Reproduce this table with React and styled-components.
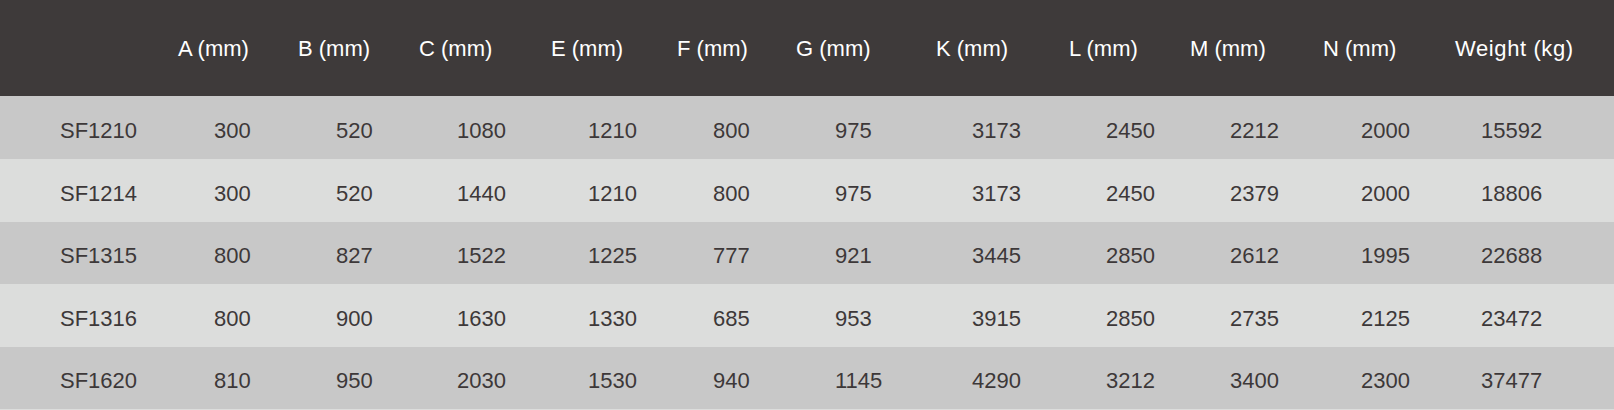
import React from 'react';
import styled, { createGlobalStyle } from 'styled-components';

const GlobalStyle = createGlobalStyle`
  html, body {
    margin: 0;
    padding: 0;
    background: #dcdddc;
  }
  body {
    font-family: "Liberation Sans", Arial, Helvetica, sans-serif;
  }
`;

// widths of each grid column, and how far the value sits from the column start
const columns = [
  { key: 'model', title: '', width: 178, offset: 60 },
  { key: 'a', title: 'A (mm)', width: 120, offset: 36 },
  { key: 'b', title: 'B (mm)', width: 121, offset: 38 },
  { key: 'c', title: 'C (mm)', width: 132, offset: 38 },
  { key: 'e', title: 'E (mm)', width: 126, offset: 37 },
  { key: 'f', title: 'F (mm)', width: 119, offset: 36 },
  { key: 'g', title: 'G (mm)', width: 140, offset: 39 },
  { key: 'k', title: 'K (mm)', width: 133, offset: 36 },
  { key: 'l', title: 'L (mm)', width: 121, offset: 37 },
  { key: 'm', title: 'M (mm)', width: 133, offset: 40 },
  { key: 'n', title: 'N (mm)', width: 132, offset: 38 },
  { key: 'w', title: 'Weight (kg)', width: 159, offset: 26, spacing: 0.6 },
];

const rows = [
  ['SF1210', '300', '520', '1080', '1210', '800', '975', '3173', '2450', '2212', '2000', '15592'],
  ['SF1214', '300', '520', '1440', '1210', '800', '975', '3173', '2450', '2379', '2000', '18806'],
  ['SF1315', '800', '827', '1522', '1225', '777', '921', '3445', '2850', '2612', '1995', '22688'],
  ['SF1316', '800', '900', '1630', '1330', '685', '953', '3915', '2850', '2735', '2125', '23472'],
  ['SF1620', '810', '950', '2030', '1530', '940', '1145', '4290', '3212', '3400', '2300', '37477'],
];

const rowHeights = [63, 63, 62, 63, 62];

const template = columns.map(c => `${c.width}px`).join(' ');

const App = () => {
  return (
    <>
      <GlobalStyle />
      <SpecTable>
        <HeaderRow>
          {columns.map(col => (
            <HeaderCell key={col.key} $spacing={col.spacing || 0}>
              {col.title}
            </HeaderCell>
          ))}
        </HeaderRow>
        {rows.map((row, i) => (
          <BodyRow key={row[0]} $striped={i % 2 === 1} $height={rowHeights[i]}>
            {row.map((value, j) => (
              <BodyCell key={columns[j].key} $offset={columns[j].offset}>
                {value}
              </BodyCell>
            ))}
          </BodyRow>
        ))}
      </SpecTable>
    </>
  );
};

const SpecTable = styled.div`
  width: 1614px;
  display: flex;
  flex-direction: column;
  font-size: 22px;
`;

const HeaderRow = styled.div`
  display: grid;
  grid-template-columns: ${template};
  height: 96px;
  background: #3e3a3a;
  color: #ffffff;
  align-items: center;
  padding-top: 1px;
  box-sizing: border-box;
`;

const HeaderCell = styled.div`
  white-space: nowrap;
  letter-spacing: ${p => p.$spacing}px;
`;

const BodyRow = styled.div`
  display: grid;
  grid-template-columns: ${template};
  height: ${p => p.$height}px;
  background: ${p => (p.$striped ? '#dcdddc' : '#c8c8c8')};
  color: #3d3839;
  align-items: center;
  padding-top: 6px;
  box-sizing: border-box;
`;

const BodyCell = styled.div`
  padding-left: ${p => p.$offset}px;
  white-space: nowrap;
`;

export default App;
